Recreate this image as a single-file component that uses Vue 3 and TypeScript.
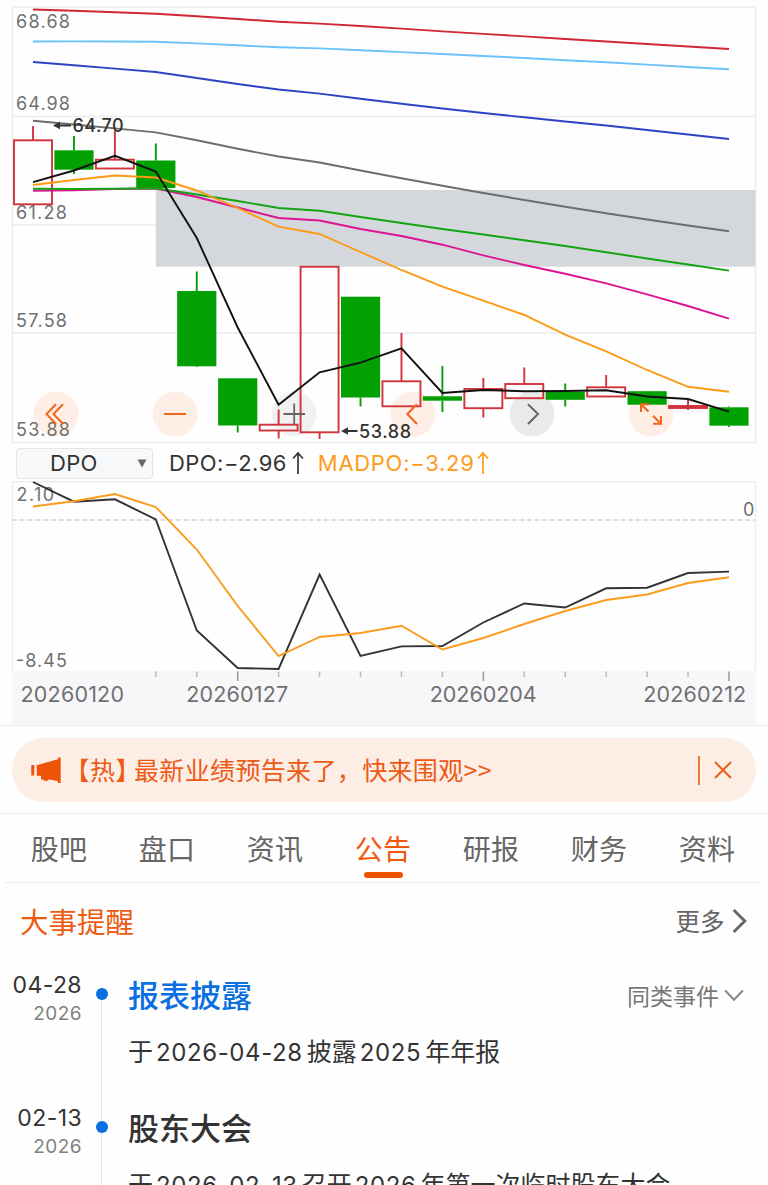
<script setup lang="ts">
interface Candle { up: boolean; top: number; bottom: number; high?: number; low?: number; solid?: boolean }
interface Series { color: string; values: number[] }

const STEP = 40.94
const xAt = (i: number): number => 33 + i * STEP
const toPoints = (values: number[]): string =>
  values.map((v, i) => `${xAt(i).toFixed(1)},${v.toFixed(1)}`).join(' ')

const candles: Candle[] = [
  { up: true, top: 140.3, bottom: 204.3, high: 126 },
  { up: false, top: 150.3, bottom: 169.7, high: 136, low: 174 },
  { up: true, top: 159.7, bottom: 168.5, high: 131 },
  { up: false, top: 160.5, bottom: 188, high: 143.5 },
  { up: false, top: 291, bottom: 366.3, high: 271.5, low: 367 },
  { up: false, top: 378.3, bottom: 425.5, low: 432.5 },
  { up: true, top: 424.7, bottom: 430.5, high: 409.5, low: 438.5 },
  { up: true, top: 266.8, bottom: 432.3, low: 439 },
  { up: false, top: 296.7, bottom: 397.5, low: 406.5 },
  { up: true, top: 381.3, bottom: 406.3, high: 333 },
  { up: false, top: 396.3, bottom: 400.7, high: 366, low: 412 },
  { up: true, top: 389, bottom: 408.2, high: 378, low: 417.5 },
  { up: true, top: 384, bottom: 398.2, high: 367.5 },
  { up: false, top: 391.7, bottom: 399.8, high: 383.5, low: 406.5 },
  { up: true, top: 387.3, bottom: 396.5, high: 375 },
  { up: false, top: 391.2, bottom: 404.7 },
  { up: true, top: 406, bottom: 408, high: 399.5, low: 410, solid: true },
  { up: false, top: 407.3, bottom: 425.7, high: 406.5, low: 427 },
]

const priceLines: Series[] = [
  { color: '#cf2733', values: [9.5, 10.8, 12.2, 13.8, 16.2, 19, 21.7, 23.6, 26, 28.6, 31.4, 33.9, 36.4, 39, 41.5, 44, 46.5, 49] },
  { color: '#6cc1fb', values: [41.5, 41.4, 41.5, 41.7, 43.4, 45.3, 47.3, 48.4, 50.3, 52.1, 54, 56, 58, 60.2, 62.3, 64.6, 67, 69.3] },
  { color: '#2d43c4', values: [62, 65.3, 68.6, 72, 78, 84, 89.5, 93.6, 98.8, 103.8, 108.5, 113, 117.3, 121.5, 125.5, 130, 134.5, 139] },
  { color: '#6d6d6d', values: [120.8, 124.5, 128.4, 132.4, 140.3, 148.8, 156.5, 162.5, 170.5, 178.3, 185.7, 193, 200, 206.8, 213.3, 219.5, 225.5, 231.3] },
  { color: '#dc1493', values: [190.7, 190.2, 189, 188.5, 197, 207.5, 218, 220.5, 229, 236, 244.7, 255.3, 265, 273.7, 283.3, 294.3, 306, 318.7] },
  { color: '#12a412', values: [188.8, 189, 188.8, 188.3, 194.5, 201, 208, 210.7, 217, 223, 229, 234.5, 240.3, 246, 252.2, 258.5, 264.5, 270.6] },
  { color: '#fc9b12', values: [185, 180, 175.5, 177.5, 190.5, 208, 226.7, 234, 252, 270, 286.7, 300.7, 315, 334.7, 351.3, 370, 386.8, 391.7] },
  { color: '#111', values: [182.2, 170.5, 155.8, 171.5, 238, 327.5, 404.8, 372.3, 362.7, 348.3, 393, 390, 391.2, 391, 390.3, 396.5, 399, 411.7] },
]

const dpoLines: Series[] = [
  { color: '#333', values: [482, 501.7, 499.3, 519.5, 630.5, 668, 669, 574.5, 656, 646.4, 646, 622.5, 603.5, 607.5, 588.3, 587.7, 573, 571.6] },
  { color: '#fc9b1c', values: [506.5, 501.2, 494, 507, 549.5, 606, 656, 637, 633, 625.7, 649.5, 638, 624, 611, 600, 594.5, 583, 577.2] },
]

const priceLabels = [
  { text: '68.68', y: 27.9, w: 54 },
  { text: '64.98', y: 109.5, w: 54 },
  { text: '61.28', y: 218.5, w: 51 },
  { text: '57.58', y: 327.3, w: 51 },
  { text: '53.88', y: 436.2, w: 54 },
]
const dateLabels = [
  { text: '20260120', x: 20.5, w: 103.5 },
  { text: '20260127', x: 186.2, w: 102 },
  { text: '20260204', x: 429.7, w: 107 },
  { text: '20260212', x: 643.2, w: 103 },
]
const ticks = Array.from({ length: 15 }, (_, k) => k + 3)
const buttons = [
  { x: 56, c: '#feeee6' },
  { x: 175, c: '#feeee6' },
  { x: 294, c: '#f1f1f1' },
  { x: 413, c: '#feeee6' },
  { x: 532, c: '#eaeaea' },
  { x: 651, c: '#feeee6' },
]

const tabs = ['股吧', '盘口', '资讯', '公告', '研报', '财务', '资料']
const activeTab = '公告'

const events = [
  { date: '04-28', year: '2026', title: '报表披露', link: true, more: true, parts: ['于', '2026-04-28', '披露', '2025', '年年报'] },
  { date: '02-13', year: '2026', title: '股东大会', link: false, more: false, parts: ['于', '2026-02-13', '召开', '2026', '年第一次临时股东大会'] },
]
const isNumeric = (s: string): boolean => /^\d/.test(s)
</script>

<template>
  <main class="page">
    <svg class="price" width="768" height="444" viewBox="0 0 768 444">
      <g fill="none" stroke="#ececf1" stroke-width="1.5">
        <rect x="12.5" y="7" width="743" height="435.5" />
        <path d="M12 116.5H755M12 224.8H755M12 333H755" />
      </g>
      <rect x="155.8" y="190" width="599.7" height="76.7" fill="#d4d7dc" />
      <circle v-for="b in buttons" :key="b.x" :cx="b.x" cy="414" r="22.5" :fill="b.c" />
      <g class="num axis-label">
        <text v-for="l in priceLabels" :key="l.text" x="16" :y="l.y" :textLength="l.w">{{ l.text }}</text>
      </g>
      <g v-for="(c, i) in candles" :key="i" :stroke="c.up ? '#d0333b' : '#03a003'" stroke-width="1.9">
        <path v-if="c.high" :d="`M${xAt(i)} ${c.high}V${c.top}`" />
        <path v-if="c.low" :d="`M${xAt(i)} ${c.bottom}V${c.low}`" />
        <rect v-if="c.up" :x="xAt(i) - 19" :y="c.top" width="38" :height="c.bottom - c.top" :fill="c.solid ? '#d0333b' : 'none'" />
        <rect v-else :x="xAt(i) - 19.6" :y="c.top" width="39.2" :height="c.bottom - c.top" fill="#03a003" stroke="none" />
      </g>
      <polyline v-for="s in priceLines" :key="s.color" :points="toPoints(s.values)" :stroke="s.color" fill="none" stroke-width="1.9" />
      <g class="num mark">
        <text x="72.5" y="132" textLength="51">64.70</text>
        <text x="359" y="437.5" textLength="52">53.88</text>
      </g>
      <path d="M56 125.5H71M347 431H357.5" fill="none" stroke="#333" stroke-width="1.8" />
      <path d="M53 125.5L60 121.7V129.3ZM341 431L348 427.2V434.8Z" fill="#333" />
      <g fill="none" stroke="#f2651c" stroke-width="2">
        <path d="M56 404.2L46.5 414L56 424M63 404.2L53.5 414L63 424" />
        <path d="M164 414H186" />
        <path d="M417 404.2L407.3 414L417 424" />
        <path d="M641 412V404.3H649M641.5 404.8L648.5 411.5M661 416V423.7H653M653 415.8L660.5 423.2" />
      </g>
      <g fill="none" stroke="#666" stroke-width="1.8">
        <path d="M283.5 414H305M294.2 403.5V424.5" />
        <path d="M528 404.2L538 414L528 424" stroke-width="2" />
      </g>
    </svg>

    <div class="toolbar num">
      <div class="select">
        <span>DPO</span>
        <svg width="10" height="9" viewBox="0 0 10 9"><path d="M.5 .5H9.5L5 8.5Z" fill="#666" /></svg>
      </div>
      <span class="reading">DPO:−2.96</span>
      <svg class="arrow" width="14" height="24" viewBox="0 0 14 24"><path d="M7 23V2M2 7.5L7 2L12 7.5" fill="none" stroke="#333" stroke-width="1.7" /></svg>
      <span class="reading ma">MADPO:−3.29</span>
      <svg class="arrow" width="14" height="24" viewBox="0 0 14 24"><path d="M7 23V2M2 7.5L7 2L12 7.5" fill="none" stroke="#fc9b1c" stroke-width="1.7" /></svg>
    </div>

    <svg class="dpo" width="768" height="244" viewBox="0 481 768 244">
      <path d="M12.5 671V481.7H755.5V671" fill="none" stroke="#ececf1" stroke-width="1.4" />
      <rect x="12" y="671" width="743.5" height="54" fill="#f7f7fa" />
      <path d="M12 520H755" stroke="#d4d4d4" stroke-width="1.6" stroke-dasharray="5 2.8" />
      <g class="num axis-label">
        <text x="16.5" y="500.5" textLength="37.5">2.10</text>
        <text x="16" y="667" textLength="51">-8.45</text>
        <text x="743" y="515.5">0</text>
      </g>
      <polyline v-for="s in dpoLines" :key="s.color" :points="toPoints(s.values)" :stroke="s.color" fill="none" stroke-width="1.9" />
      <path
        v-for="t in ticks" :key="t" :d="`M${xAt(t)} 671.5v${t % 6 === 5 ? 9.5 : 5.5}`"
        :stroke="t % 6 === 5 ? '#999' : '#bbb'" stroke-width="1.5"
      />
      <g class="num date-label">
        <text v-for="d in dateLabels" :key="d.text" :x="d.x" y="702" :textLength="d.w">{{ d.text }}</text>
      </g>
    </svg>

    <section class="notice-wrap">
      <div class="notice">
        <svg class="horn" width="32" height="28" viewBox="0 0 32 28">
          <path d="M1.3 9H4.3V19.5H1.3ZM6.7 9.2L28 3.2V1.5H30.7V27H28V25.3L18.5 23.2V24.8H14L13 23.5H11V19.7H6.7Z" fill="#ed5305" />
        </svg>
        <p class="notice-text"><span class="tag">【热】</span><span>最新业绩预告来了，快来围观&gt;&gt;</span></p>
        <i class="bar"></i>
        <svg class="x" width="18" height="18" viewBox="0 0 18 18"><path d="M1 1L17 17M17 1L1 17" fill="none" stroke="#ed5a15" stroke-width="1.9" /></svg>
      </div>
    </section>

    <nav class="tabs">
      <span v-for="t in tabs" :key="t" class="tab" :class="{ active: t === activeTab }">{{ t }}</span>
    </nav>

    <header class="head">
      <h2>大事提醒</h2>
      <span class="more">更多</span>
      <svg width="16" height="26" viewBox="0 0 16 26"><path d="M1.7 2L12.8 13L1.7 24" fill="none" stroke="#666" stroke-width="2.9" /></svg>
    </header>

    <section class="timeline">
      <article v-for="e in events" :key="e.date" class="event">
        <div class="when num">
          <div class="day">{{ e.date }}</div>
          <div class="year">{{ e.year }}</div>
        </div>
        <div class="rail"><i class="dot"></i><i class="line"></i></div>
        <div class="what">
          <div class="title-row">
            <h3 :class="{ link: e.link }">{{ e.title }}</h3>
            <template v-if="e.more">
              <span class="similar">同类事件</span>
              <svg width="20" height="13" viewBox="0 0 20 13"><path d="M1.2 1.5L10 10.7L18.8 1.5" fill="none" stroke="#888" stroke-width="2" /></svg>
            </template>
          </div>
          <p class="desc"><span v-for="(p, k) in e.parts" :key="k" :class="{ figure: isNumeric(p) }">{{ p }}</span></p>
        </div>
      </article>
    </section>
  </main>
</template>

<style>
body { margin: 0; background: #fefefe; }
</style>

<style scoped>
.page { width: 768px; height: 1185px; overflow: hidden; background: #fefefe; font-family: "Noto Sans CJK SC", sans-serif; color: #333; }
.page svg { display: block; flex: none; }
.num { font-family: Inter, "Liberation Sans", sans-serif; }
.axis-label { font-size: 18px; fill: #707070; }
.mark { font-size: 18px; font-weight: 500; fill: #333; }
.date-label { font-size: 21.5px; fill: #707070; }

.toolbar { display: flex; align-items: center; height: 37px; padding-left: 16px; box-sizing: border-box; font-size: 22px; }
.select { display: flex; align-items: center; justify-content: space-between; box-sizing: border-box; width: 137px; height: 31px; padding: 0 5px 0 33px; margin-top: 1px; border: 1.5px solid #e4e5ea; border-radius: 4px; background: #f7f8fa; letter-spacing: .3px; }
.reading { margin-left: 16px; white-space: nowrap; letter-spacing: .45px; }
.reading.ma { margin-left: 13px; color: #fc9b1c; letter-spacing: .7px; }
.arrow { margin-left: 4px; }
.reading.ma + .arrow { margin-left: 2px; }

.notice-wrap { box-sizing: border-box; height: 89px; padding: 12px 12.5px; border-top: 1.5px solid #ececee; border-bottom: 1.5px solid #ececee; }
.notice { display: flex; align-items: center; height: 64px; margin: 0 0 0 -.5px; border-radius: 32px; background: #fceee5; color: #ed5a15; }
.horn { margin-left: 18px; }
.notice-text { display: flex; flex: 1; margin: 0; padding-bottom: 3px; font-size: 25px; letter-spacing: .35px; line-height: 36px; white-space: nowrap; }
.tag { flex: none; width: 72px; font-feature-settings: "halt"; text-indent: 15px; letter-spacing: .5px; }
.bar { width: 2px; height: 29px; margin-right: 14px; background: #f0753a; }
.x { margin-right: 23.5px; }

.tabs { display: flex; box-sizing: border-box; height: 68.5px; margin: 0 7px 0 5px; border-bottom: 1.5px solid #ececf0; }
.tab { position: relative; flex: 1; text-align: center; font-size: 28px; line-height: 68px; color: #666; letter-spacing: .3px; }
.tab.active { color: #f0590b; }
.tab.active::after { content: ""; position: absolute; left: 50%; bottom: 3.5px; width: 39px; height: 6px; margin-left: -19.5px; border-radius: 3px; background: #ed5305; }

.head { display: flex; align-items: center; height: 77.5px; padding: 0 20px; }
.head h2 { flex: 1; margin: 0; padding-bottom: 2px; font-size: 28.5px; font-weight: 400; color: #ee5a10; }
.more { padding-bottom: 2px; font-size: 24.5px; color: #666; margin-right: 7.5px; }

.event { display: flex; height: 133px; }
.when { width: 82px; padding-top: 10px; box-sizing: border-box; text-align: right; }
.day { font-size: 23px; line-height: 31px; letter-spacing: .4px; }
.year { font-size: 19px; line-height: 26px; color: #808080; letter-spacing: .45px; }
.rail { display: flex; flex-direction: column; align-items: center; width: 39px; }
.dot { flex: none; width: 12px; height: 12px; margin-top: 28px; border-radius: 50%; background: #0a6fe0; }
.event + .event .dot { margin-top: 0; }
.event + .event .rail::before { content: ""; flex: none; width: 1.5px; height: 28px; background: #e2e3e6; }
.line { flex: 1; width: 1.5px; background: #e2e3e6; }
.what { flex: 1; padding-left: 7px; }
.title-row { display: flex; align-items: center; height: 71px; padding-right: 24px; }
.title-row h3 { flex: 1; margin: 0; padding-bottom: 4px; font-size: 31px; font-weight: 500; }
.title-row h3.link { color: #0a6fe0; }
.similar { padding-bottom: 2px; font-size: 23px; color: #777; margin-right: 5px; }
.desc { margin: 0; padding-top: 1px; font-size: 25px; line-height: 36px; white-space: nowrap; }
.figure { font-family: Inter, "Liberation Sans", sans-serif; font-size: 24px; margin: 0 4px 0 3px; letter-spacing: .6px; }
</style>
